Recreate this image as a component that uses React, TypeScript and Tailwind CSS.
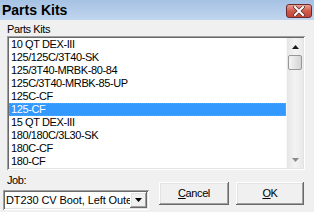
import React from 'react';

const kits = [
  '10 QT DEX-III',
  '125/125C/3T40-SK',
  '125/3T40-MRBK-80-84',
  '125C/3T40-MRBK-85-UP',
  '125C-CF',
  '125-CF',
  '15 QT DEX-III',
  '180/180C/3L30-SK',
  '180C-CF',
  '180-CF',
];

const selected = '125-CF';

function CloseButton() {
  return (
    <div className="mt-[4px] mr-[2px] w-[26px] h-[14px] rounded-[3px] border border-[#6b2a30] bg-gradient-to-b from-[#e8a193] via-[#cf5a4c] to-[#c0463a] flex items-center justify-center">
      <svg width="12" height="10" viewBox="0 0 12 10">
        <path d="M2 1 L10 9 M10 1 L2 9" stroke="#5a2a2a" strokeWidth="3.4" strokeLinecap="square" />
        <path d="M2 1 L10 9 M10 1 L2 9" stroke="#ffffff" strokeWidth="2" strokeLinecap="square" />
      </svg>
    </div>
  );
}

function Scrollbar() {
  return (
    <div className="w-[17px] h-full flex flex-col bg-gradient-to-r from-[#e6e6e6] via-[#f3f3f3] to-[#e9e9e9] border-l border-[#f7f7f7]">
      <div className="h-[17px] flex items-center justify-center">
        <svg width="7" height="4" viewBox="0 0 7 4">
          <path d="M3.5 0 L7 4 L0 4 Z" fill="#1a1a1a" />
        </svg>
      </div>
      <div className="mx-[1px] h-[15px] rounded-[2px] border border-[#979797] bg-gradient-to-r from-[#f5f5f5] to-[#d4d4d4]" />
      <div className="flex-1" />
      <div className="h-[17px] flex items-center justify-center">
        <svg width="7" height="4" viewBox="0 0 7 4">
          <path d="M0 0 L7 0 L3.5 4 Z" fill="#8a8a8a" />
        </svg>
      </div>
    </div>
  );
}

function PushButton({ children, w }: { children: React.ReactNode; w: string }) {
  return (
    <div
      className={`${w} h-[23px] bg-[#f0f0f0] flex items-center justify-center shadow-[inset_-1px_-1px_0_#696969,inset_1px_1px_0_#ffffff,inset_-2px_-2px_0_#a0a0a0,inset_2px_2px_0_#e3e3e3]`}
    >
      {children}
    </div>
  );
}

export default function App() {
  return (
    <div className="w-[314px] h-[212px] overflow-hidden bg-[#f0f0f0] flex flex-col font-['Liberation_Sans',Arial,sans-serif] text-black">
      <div className="h-[20px] flex items-start justify-between bg-gradient-to-b from-[#a5c1e3] to-[#c1d6ee]">
        <span className="pl-[2px] text-[14px] font-bold leading-[20px]">Parts Kits</span>
        <CloseButton />
      </div>

      <div className="px-[7px] pt-[3px] text-[11px] leading-[13px] tracking-[-0.4px]">
        <div className="h-[13px]">Parts Kits</div>
        <div className="w-[298px] h-[134px] p-[2px] bg-white flex shadow-[inset_1px_1px_0_#a0a0a0,inset_-1px_-1px_0_#ffffff,inset_2px_2px_0_#696969,inset_-2px_-2px_0_#e3e3e3]">
          <div className="flex-1 flex flex-col">
            {kits.map((kit) =>
              kit === selected ? (
                <div
                  key={kit}
                  className="h-[13px] pl-[1px] bg-[#3399ff] text-white border border-dotted border-[#c9914f] leading-[11px]"
                >
                  {kit}
                </div>
              ) : (
                <div key={kit} className="h-[13px] pl-[2px]">
                  {kit}
                </div>
              )
            )}
          </div>
          <Scrollbar />
        </div>
      </div>

      <div className="mt-[4px] flex items-start text-[11px] leading-[13px] tracking-[-0.4px]">
        <div className="pl-[3px] flex flex-col">
          <div className="h-[13px] pl-[4px]">Job:</div>
          <div className="mt-[3px] w-[146px] h-[20px] p-[2px] bg-white flex shadow-[inset_1px_1px_0_#a0a0a0,inset_-1px_-1px_0_#ffffff,inset_2px_2px_0_#696969,inset_-2px_-2px_0_#e3e3e3]">
            <div className="flex-1 overflow-hidden whitespace-nowrap pl-[1px] leading-[16px] tracking-[-0.1px]">
              DT230 CV Boot, Left Outer
            </div>
            <div className="w-[17px] h-[16px] bg-[#f0f0f0] flex items-center justify-center shadow-[inset_-1px_-1px_0_#696969,inset_1px_1px_0_#ffffff,inset_-2px_-2px_0_#a0a0a0,inset_2px_2px_0_#e3e3e3]">
              <svg width="7" height="4" viewBox="0 0 7 4">
                <path d="M0 0 L7 0 L3.5 4 Z" fill="#000000" />
              </svg>
            </div>
          </div>
        </div>
        <div className="ml-[10px] mt-[8px] flex gap-[7px]">
          <PushButton w="w-[70px]">
            <span>
              <span className="underline underline-offset-[1px]">C</span>ancel
            </span>
          </PushButton>
          <PushButton w="w-[68px]">
            <span>
              <span className="underline underline-offset-[1px]">O</span>K
            </span>
          </PushButton>
        </div>
      </div>
    </div>
  );
}
